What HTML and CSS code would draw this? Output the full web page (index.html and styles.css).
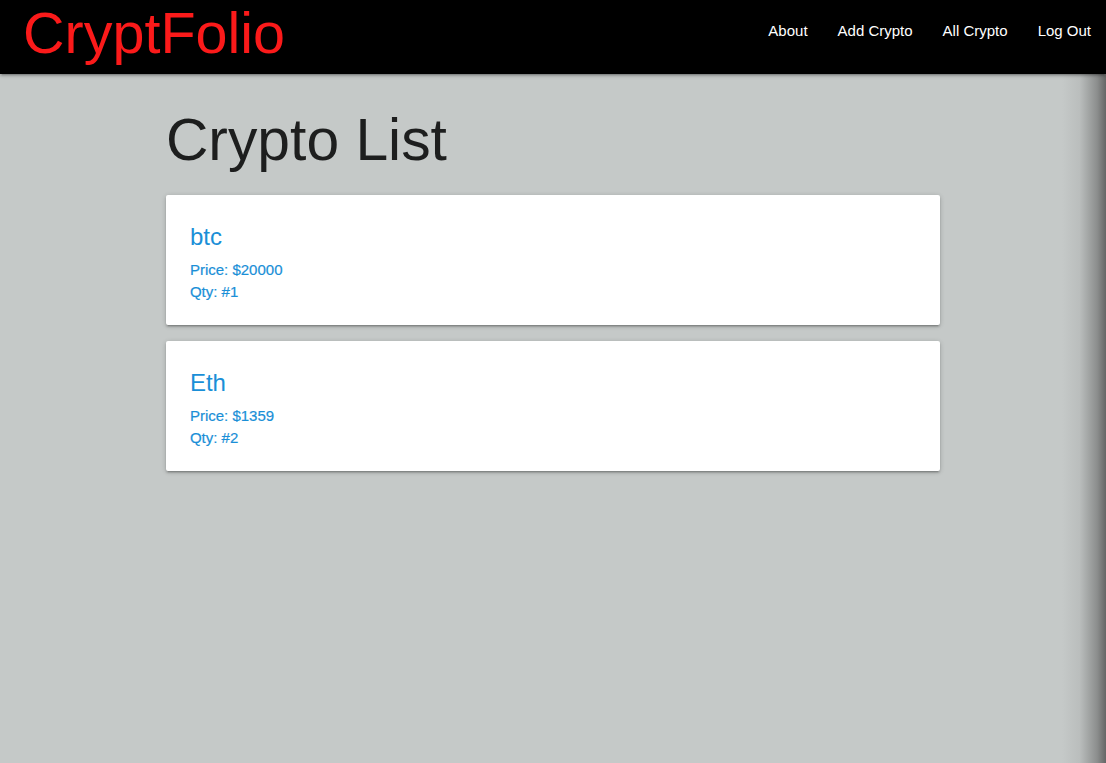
FILE: index.html
```html
<!DOCTYPE html>
<html lang="en">
<head>
<meta charset="utf-8">
<title>CryptFolio</title>
<link rel="stylesheet" href="styles.css">
</head>
<body>
<nav class="nav">
  <a class="brand" href="#">CryptFolio</a>
  <ul class="nav-links">
    <li><a href="#">About</a></li>
    <li><a href="#">Add Crypto</a></li>
    <li><a href="#">All Crypto</a></li>
    <li><a href="#">Log Out</a></li>
  </ul>
</nav>
<main class="container">
  <h1 class="page-title">Crypto List</h1>
  <div class="card">
    <div class="card-title">btc</div>
    <p class="card-line">Price: $20000</p>
    <p class="card-line">Qty: #1</p>
  </div>
  <div class="card">
    <div class="card-title">Eth</div>
    <p class="card-line">Price: $1359</p>
    <p class="card-line">Qty: #2</p>
  </div>
</main>
<div class="edge-shadow"></div>
</body>
</html>
```

FILE: styles.css
```css
* { box-sizing: border-box; }
html, body { margin: 0; padding: 0; }
body {
  background: #c5c9c8;
  font-family: "Liberation Sans", Arial, sans-serif;
  min-height: 763px;
  position: relative;
  overflow: hidden;
}
.nav {
  height: 74px;
  background: #000;
  display: flex;
  align-items: center;
  justify-content: space-between;
  padding: 0 0 0 23px;
  box-shadow: 0 2px 2px 0 rgba(0,0,0,0.14), 0 3px 1px -2px rgba(0,0,0,0.12), 0 1px 5px 0 rgba(0,0,0,0.2);
  position: relative;
  z-index: 1;
}
.brand {
  color: #fb1a1a;
  text-decoration: none;
  font-size: 57.5px;
  line-height: 64px;
  margin-top: -8px;
}
.nav-links {
  list-style: none;
  margin: 0;
  padding: 0;
  display: flex;
  margin-top: -13px;
}
.nav-links a {
  display: block;
  color: #fff;
  text-decoration: none;
  font-size: 15px;
  padding: 0 15px;
  line-height: 36px;
}
.container {
  width: 70%;
  margin: 0 auto;
}
.page-title {
  font-size: 58.8px;
  font-weight: 400;
  color: #1d1e1e;
  margin: 0;
  padding-top: 31px;
  line-height: 70px;
  margin-bottom: 20px;
}
.card {
  background: #fff;
  border-radius: 2px;
  padding: 24px;
  margin: 0 0 16px;
  height: 130px;
  box-shadow: 0 2px 2px 0 rgba(0,0,0,0.14), 0 3px 1px -2px rgba(0,0,0,0.12), 0 1px 5px 0 rgba(0,0,0,0.2);
  color: #1a8fd7;
}
.card-title {
  font-size: 24px;
  line-height: 32px;
  padding-top: 2px;
  margin-bottom: 6px;
}
.card-line {
  margin: 0;
  font-size: 15px;
  line-height: 22px;
  -webkit-text-stroke: 0.2px #1a8fd7;
}
.edge-shadow {
  position: absolute;
  top: 0;
  right: 0;
  width: 44px;
  height: 100%;
  pointer-events: none;
  background: linear-gradient(to right, rgba(90,90,90,0) 0%, rgba(90,90,90,0.1) 40%, rgba(70,70,70,0.45) 80%, rgba(60,60,60,0.7) 100%);
}
```
